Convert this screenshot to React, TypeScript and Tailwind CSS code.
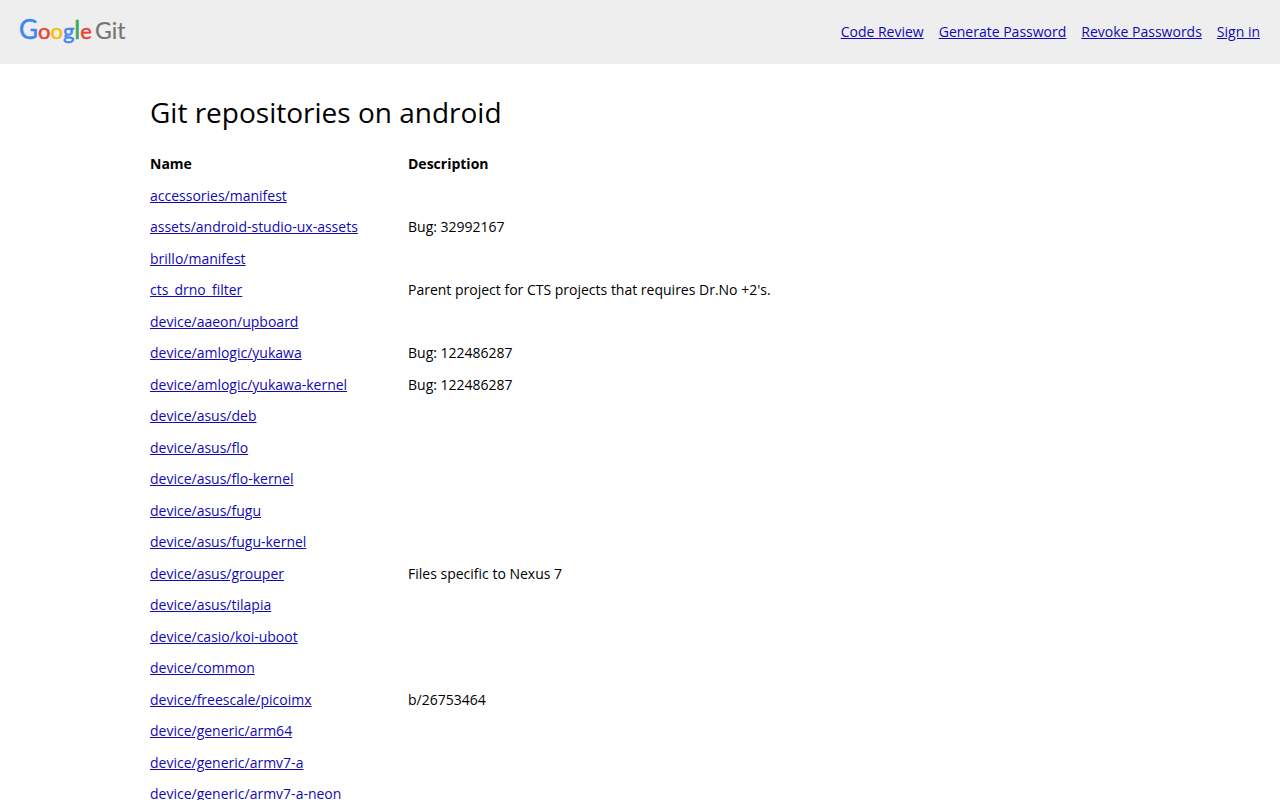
type Repo = { name: string; description?: string };

const menu = ["Code Review", "Generate Password", "Revoke Passwords", "Sign in"];

const repos: Repo[] = [
  { name: "accessories/manifest" },
  { name: "assets/android-studio-ux-assets", description: "Bug: 32992167" },
  { name: "brillo/manifest" },
  { name: "cts_drno_filter", description: "Parent project for CTS projects that requires Dr.No +2's." },
  { name: "device/aaeon/upboard" },
  { name: "device/amlogic/yukawa", description: "Bug: 122486287" },
  { name: "device/amlogic/yukawa-kernel", description: "Bug: 122486287" },
  { name: "device/asus/deb" },
  { name: "device/asus/flo" },
  { name: "device/asus/flo-kernel" },
  { name: "device/asus/fugu" },
  { name: "device/asus/fugu-kernel" },
  { name: "device/asus/grouper", description: "Files specific to Nexus 7" },
  { name: "device/asus/tilapia" },
  { name: "device/casio/koi-uboot" },
  { name: "device/common" },
  { name: "device/freescale/picoimx", description: "b/26753464" },
  { name: "device/generic/arm64" },
  { name: "device/generic/armv7-a" },
  { name: "device/generic/armv7-a-neon" },
];

function Logo() {
  return (
    <svg
      className="overflow-visible"
      width="108"
      height="32"
      viewBox="0 0 108 32"
      role="img"
      aria-label="Google Git"
    >
      <g fontFamily="Lato, sans-serif">
        <text x="-1" y="23" fontSize="22" strokeWidth="0.5">
          <tspan fill="#4285f4" stroke="#4285f4" fontSize="26">G</tspan>
          <tspan fill="#ea4335" stroke="#ea4335">o</tspan>
          <tspan fill="#fbbc05" stroke="#fbbc05">o</tspan>
          <tspan fill="#4285f4" stroke="#4285f4">g</tspan>
          <tspan fill="#34a853" stroke="#34a853" fontSize="25">l</tspan>
          <tspan fill="#ea4335" stroke="#ea4335">e</tspan>
        </text>
        <text x="75" y="23" fontSize="23" fill="#757575" stroke="#757575" strokeWidth="0.2">
          Git
        </text>
      </g>
    </svg>
  );
}

export default function App() {
  return (
    <div className="bg-white font-['Open_Sans',sans-serif] text-sm text-black">
      <header className="flex h-16 items-center justify-between bg-[#eeeeee] px-5">
        <a href="/" aria-label="Google Git">
          <Logo />
        </a>
        <nav className="flex gap-[15px]">
          {menu.map((item) => (
            <a key={item} href="#" className="text-[#1309b6] underline">
              {item}
            </a>
          ))}
        </nav>
      </header>
      <main className="mx-auto max-w-[980px] pt-7">
        <h1 className="text-[28px] leading-10">Git repositories on android</h1>
        <table className="mt-4 w-full table-fixed border-collapse text-left">
          <thead>
            <tr className="leading-[22px]">
              <th className="w-[258px] py-[5px] font-bold">Name</th>
              <th className="py-[5px] font-bold">Description</th>
            </tr>
          </thead>
          <tbody>
            {repos.map((repo) => (
              <tr key={repo.name} className="leading-[22px] odd:leading-[21px]">
                <td className="py-[5px]">
                  <a href={`/${repo.name}/`} className="text-[#1309b6] underline">
                    {repo.name}
                  </a>
                </td>
                <td className="py-[5px]">{repo.description}</td>
              </tr>
            ))}
          </tbody>
        </table>
      </main>
    </div>
  );
}
